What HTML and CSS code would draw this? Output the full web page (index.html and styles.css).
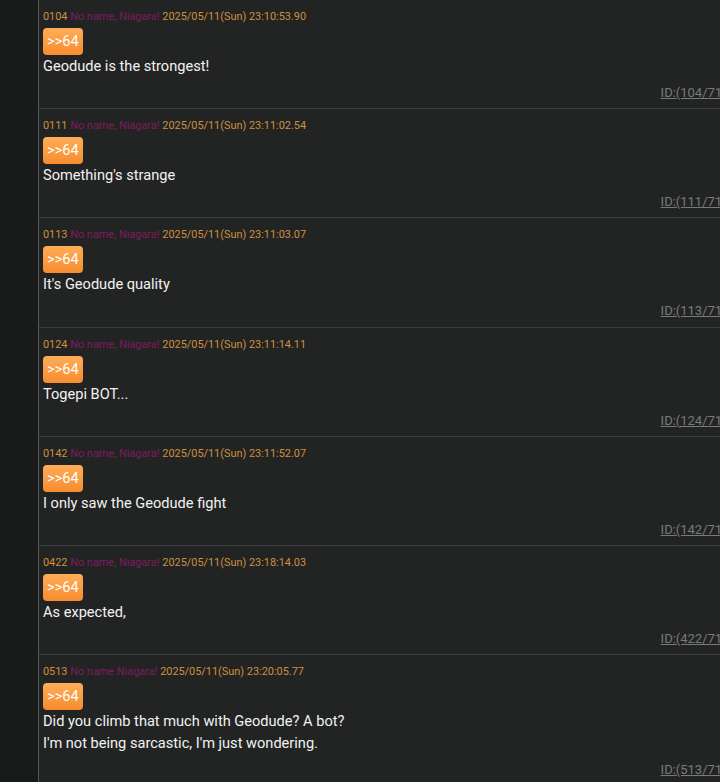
FILE: index.html
```html
<!DOCTYPE html>
<html lang="en">
<head>
    <meta charset="UTF-8">
    <meta name="viewport" content="width=device-width, initial-scale=1.0">
    <title>Thread</title>
    <link rel="stylesheet" href="styles.css">
</head>
<body>
    <div class="page">
        <div class="side"></div>

        <!-- Replies to >>64 -->
        <div class="thread">
            <div class="post">
                <div class="post-head"><span class="num">0104</span> <span class="name">No name, Niagara!</span> <span class="date">2025/05/11(Sun) 23:10:53.90</span></div>
                <div class="anchor-row"><a class="anchor" href="#">&gt;&gt;64</a></div>
                <div class="post-body">Geodude is the strongest!</div>
                <div class="post-id"><a href="#">ID:(104/717)</a></div>
            </div>

            <div class="post">
                <div class="post-head"><span class="num">0111</span> <span class="name">No name, Niagara!</span> <span class="date">2025/05/11(Sun) 23:11:02.54</span></div>
                <div class="anchor-row"><a class="anchor" href="#">&gt;&gt;64</a></div>
                <div class="post-body">Something's strange</div>
                <div class="post-id"><a href="#">ID:(111/717)</a></div>
            </div>

            <div class="post">
                <div class="post-head"><span class="num">0113</span> <span class="name">No name, Niagara!</span> <span class="date">2025/05/11(Sun) 23:11:03.07</span></div>
                <div class="anchor-row"><a class="anchor" href="#">&gt;&gt;64</a></div>
                <div class="post-body">It's Geodude quality</div>
                <div class="post-id"><a href="#">ID:(113/717)</a></div>
            </div>

            <div class="post">
                <div class="post-head"><span class="num">0124</span> <span class="name">No name, Niagara!</span> <span class="date">2025/05/11(Sun) 23:11:14.11</span></div>
                <div class="anchor-row"><a class="anchor" href="#">&gt;&gt;64</a></div>
                <div class="post-body">Togepi BOT...</div>
                <div class="post-id"><a href="#">ID:(124/717)</a></div>
            </div>

            <div class="post">
                <div class="post-head"><span class="num">0142</span> <span class="name">No name, Niagara!</span> <span class="date">2025/05/11(Sun) 23:11:52.07</span></div>
                <div class="anchor-row"><a class="anchor" href="#">&gt;&gt;64</a></div>
                <div class="post-body">I only saw the Geodude fight</div>
                <div class="post-id"><a href="#">ID:(142/717)</a></div>
            </div>

            <div class="post">
                <div class="post-head"><span class="num">0422</span> <span class="name">No name, Niagara!</span> <span class="date">2025/05/11(Sun) 23:18:14.03</span></div>
                <div class="anchor-row"><a class="anchor" href="#">&gt;&gt;64</a></div>
                <div class="post-body">As expected,</div>
                <div class="post-id"><a href="#">ID:(422/717)</a></div>
            </div>

            <div class="post">
                <div class="post-head"><span class="num">0513</span> <span class="name">No name Niagara!</span> <span class="date">2025/05/11(Sun) 23:20:05.77</span></div>
                <div class="anchor-row"><a class="anchor" href="#">&gt;&gt;64</a></div>
                <div class="post-body">Did you climb that much with Geodude? A bot?<br>I'm not being sarcastic, I'm just wondering.</div>
                <div class="post-id"><a href="#">ID:(513/717)</a></div>
            </div>
        </div>
    </div>
</body>
</html>
```

FILE: styles.css
```css
* {
    margin: 0;
    padding: 0;
    box-sizing: border-box;
}

html, body {
    background-color: #1a1a1a;
    font-family: Roboto, "Liberation Sans", sans-serif;
    overflow: hidden;
}

.page {
    display: flex;
    min-height: 782px;
}

/* dark strip on the left */
.side {
    width: 39px;
    flex-shrink: 0;
    background-color: #191a1a;
    border-right: 1px solid #555757;
}

.thread {
    width: 695px;
    flex-shrink: 0;
    background-color: #222424;
}

.post {
    padding: 10px 0 7.2px 4px;
    border-bottom: 1px solid #3a3c3c;
}

.post-head {
    font-size: 10.9px;
    line-height: 14px;
    color: #d08f3e;
    white-space: nowrap;
}

.post-head .name {
    color: #7e1b5e;
}

.anchor-row {
    margin-top: 4px;
    height: 27px;
}

.anchor {
    display: inline-block;
    height: 27px;
    padding: 0 4px;
    line-height: 27px;
    font-size: 14.6px;
    color: #fff;
    text-decoration: none;
    border-radius: 4px;
    background: linear-gradient(#ffad58, #f78c2e);
}

.post-body {
    font-size: 14.6px;
    line-height: 22px;
    color: #f2f2f2;
}

.post-id {
    margin-top: 8px;
    font-size: 13px;
    line-height: 16px;
    text-align: right;
}

.post-id a {
    color: #7a7a7a;
    text-decoration: underline;
}
```
